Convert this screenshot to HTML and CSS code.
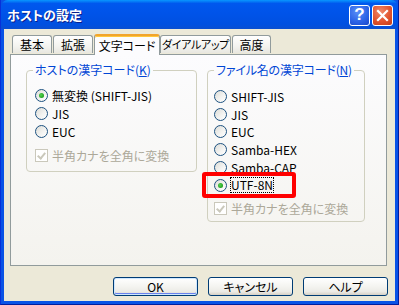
FILE: index.html
```html
<!DOCTYPE html>
<html>
<head>
  <meta charset="utf-8">
  <title>ホストの設定</title>
  <link rel="stylesheet" href="styles.css">
</head>
<body>
  <div class="window">
    <div class="titlebar">
      <span class="title">ホストの設定</span>
      <div class="caption-buttons">
        <span class="cap-btn help">?</span>
        <span class="cap-btn close">
          <svg width="13" height="13" viewBox="0 0 13 13">
            <path d="M2 2 L11 11 M11 2 L2 11" stroke="#fff" stroke-width="2.2" stroke-linecap="square"/>
          </svg>
        </span>
      </div>
    </div>

    <div class="content">
      <div class="tabs">
        <span class="tab tab-short">基本</span>
        <span class="tab tab-short">拡張</span>
        <span class="tab tab-code active">文字コード</span>
        <span class="tab tab-dial">ダイアルアップ</span>
        <span class="tab tab-adv">高度</span>
      </div>

      <div class="panel">
        <fieldset class="group group-left">
          <legend>ホストの漢字コード(<u>K</u>)</legend>
          <div class="row"><span class="radio checked"></span>無変換 (SHIFT-JIS)</div>
          <div class="row"><span class="radio"></span>JIS</div>
          <div class="row"><span class="radio"></span>EUC</div>
          <div class="row check-row disabled"><span class="checkbox"></span>半角カナを全角に変換</div>
        </fieldset>

        <fieldset class="group group-right">
          <legend>ファイル名の漢字コード(<u>N</u>)</legend>
          <div class="row"><span class="radio"></span>SHIFT-JIS</div>
          <div class="row"><span class="radio"></span>JIS</div>
          <div class="row short"><span class="radio"></span>EUC</div>
          <div class="row"><span class="radio"></span>Samba-HEX</div>
          <div class="row"><span class="radio"></span>Samba-CAP</div>
          <div class="row marked"><span class="radio checked"></span><span class="focus">UTF-8N</span><span class="highlight"></span></div>
          <div class="row check-row disabled"><span class="checkbox"></span>半角カナを全角に変換</div>
        </fieldset>
      </div>

      <div class="buttons">
        <button class="btn default">OK</button>
        <button class="btn">キャンセル</button>
        <button class="btn">ヘルプ</button>
      </div>
    </div>
  </div>
</body>
</html>
```

FILE: styles.css
```css
body {
  margin: 0;
  padding: 0;
  font-family: "Noto Sans CJK JP", "Liberation Sans", sans-serif;
  font-size: 12px;
  font-feature-settings: "palt";
  color: #000;
}

.window {
  width: 399px;
  height: 305px;
  display: flex;
  flex-direction: column;
  background: #0a53e6;
  box-sizing: border-box;
  border-left: 1px solid #0831d9;
  border-right: 1px solid #001ea0;
  border-bottom: 1px solid #001ea0;
}

.titlebar {
  height: 29px;
  display: flex;
  align-items: center;
  justify-content: space-between;
  padding: 0 5px 0 6px;
  background: linear-gradient(to bottom, #0997ff 0%, #0058ee 12%, #0053e8 50%, #0050e0 85%, #0a4fd0 100%);
  border-radius: 7px 7px 0 0;
}

.title {
  color: #fff;
  font-weight: bold;
  font-size: 13px;
  text-shadow: 1px 1px 0 #0a1e8c;
}

.caption-buttons {
  display: flex;
  gap: 2px;
  margin-top: 1px;
}

.cap-btn {
  width: 19px;
  height: 19px;
  border: 1px solid #fff;
  border-radius: 3px;
  display: flex;
  align-items: center;
  justify-content: center;
  color: #fff;
  font-family: "Liberation Sans", sans-serif;
  font-weight: bold;
  font-size: 17px;
}

.help {
  background: radial-gradient(circle at 40% 30%, #5a8ff7 0%, #2b62e6 60%, #1a48c8 100%);
}

.close {
  background: radial-gradient(circle at 40% 30%, #f08a6c 0%, #e2542f 55%, #c33c16 100%);
}

.content {
  flex: 1;
  background: #ece9d8;
  margin: 0 3px 3px 3px;
  padding: 5px 9px 0 6px;
  display: flex;
  flex-direction: column;
}

.tabs {
  display: flex;
  align-items: flex-end;
  padding-left: 2px;
  height: 20px;
  position: relative;
  z-index: 1;
}

.tab {
  box-sizing: border-box;
  height: 18px;
  line-height: 17px;
  text-align: center;
  margin-right: 1px;
  border: 1px solid #919b9c;
  border-bottom: none;
  border-radius: 3px 3px 0 0;
  background: linear-gradient(to bottom, #ffffff, #f3f3ef 60%, #e8e7e0);
  white-space: nowrap;
  margin-bottom: 1px;
  overflow: hidden;
}

.tab-short {
  width: 40px;
}

.tab-code {
  width: 66px;
}

.tab-dial {
  width: 71px;
  font-size: 11px;
  letter-spacing: -0.3px;
}

.tab-adv {
  width: 39px;
}

.tab.active {
  height: 21px;
  line-height: 19px;
  margin-bottom: -1px;
  margin-right: 0;
  background: #fcfcfe;
  border-top: 2px solid #f1a42d;
  box-shadow: inset 0 1px 0 #ffc83c;
}

.panel {
  width: 377px;
  height: 212px;
  box-sizing: border-box;
  border: 1px solid #919b9c;
  background: linear-gradient(to bottom, #fcfcfe, #f4f3ee);
  padding: 8px 0 0 15px;
  display: flex;
  align-items: flex-start;
  gap: 10px;
}

.group {
  margin: 0;
  border: 1px solid #d0d0bf;
  border-radius: 4px;
  box-sizing: border-box;
  min-width: 0;
}

.group legend {
  color: #0046d5;
  padding: 0 2px;
  line-height: 14px;
  white-space: nowrap;
}

.group legend u {
  text-decoration-thickness: 1px;
}

.group-left {
  width: 171px;
  padding: 9px 0 7px 8px;
}

.group-left legend {
  margin-left: -2px;
}

.group-right {
  width: 158px;
  padding: 10px 0 4px 6px;
}

.group-right legend {
  margin-left: 0;
  letter-spacing: -0.2px;
}

.row {
  height: 18px;
  display: flex;
  align-items: center;
  gap: 4px;
  white-space: nowrap;
  position: relative;
}

.row.short {
  height: 17px;
}

.check-row {
  margin-top: 6px;
}

.group-right .check-row {
  margin-top: 5px;
}

.disabled {
  color: #aca899;
}

.radio {
  width: 11px;
  height: 11px;
  border: 1px solid #1c5180;
  border-radius: 50%;
  background: linear-gradient(135deg, #dcdcd7, #f4f4f2 60%, #ffffff);
  position: relative;
  flex: none;
}

.radio.checked::after {
  content: "";
  position: absolute;
  left: 3px;
  top: 3px;
  width: 5px;
  height: 5px;
  border-radius: 50%;
  background: radial-gradient(circle at 40% 40%, #55d451, #21a121 70%, #1a8a1a);
}

.checkbox {
  width: 11px;
  height: 11px;
  border: 1px solid #cac8bb;
  background: #fff;
  position: relative;
  flex: none;
}

.checkbox::after {
  content: "";
  position: absolute;
  left: 3px;
  top: 1px;
  width: 3px;
  height: 6px;
  border: solid #cac8bb;
  border-width: 0 2px 2px 0;
  transform: rotate(40deg);
}

.focus {
  outline: 1px dotted #000;
  outline-offset: 0;
  line-height: 14px;
}

.highlight {
  position: absolute;
  left: -12px;
  top: -4px;
  width: 86px;
  height: 18px;
  border: 4px solid #ff0000;
  border-radius: 3px;
}

.buttons {
  display: flex;
  justify-content: flex-end;
  gap: 10px;
  margin-top: 11px;
  margin-right: -2px;
}

.btn {
  width: 85px;
  height: 19px;
  padding: 0;
  font-family: "Noto Sans CJK JP", "Liberation Sans", sans-serif;
  font-size: 12px;
  font-feature-settings: "palt";
  line-height: 17px;
  border: 1px solid #003c74;
  border-radius: 3px;
  background: linear-gradient(to bottom, #ffffff, #f4f4f0 50%, #ecebe6 80%, #d6d0c5);
  color: #000;
}

.btn.default {
  box-shadow: inset 0 0 0 1px #cee7ff, inset 0 -1px 0 1px #6982ee;
}
```
